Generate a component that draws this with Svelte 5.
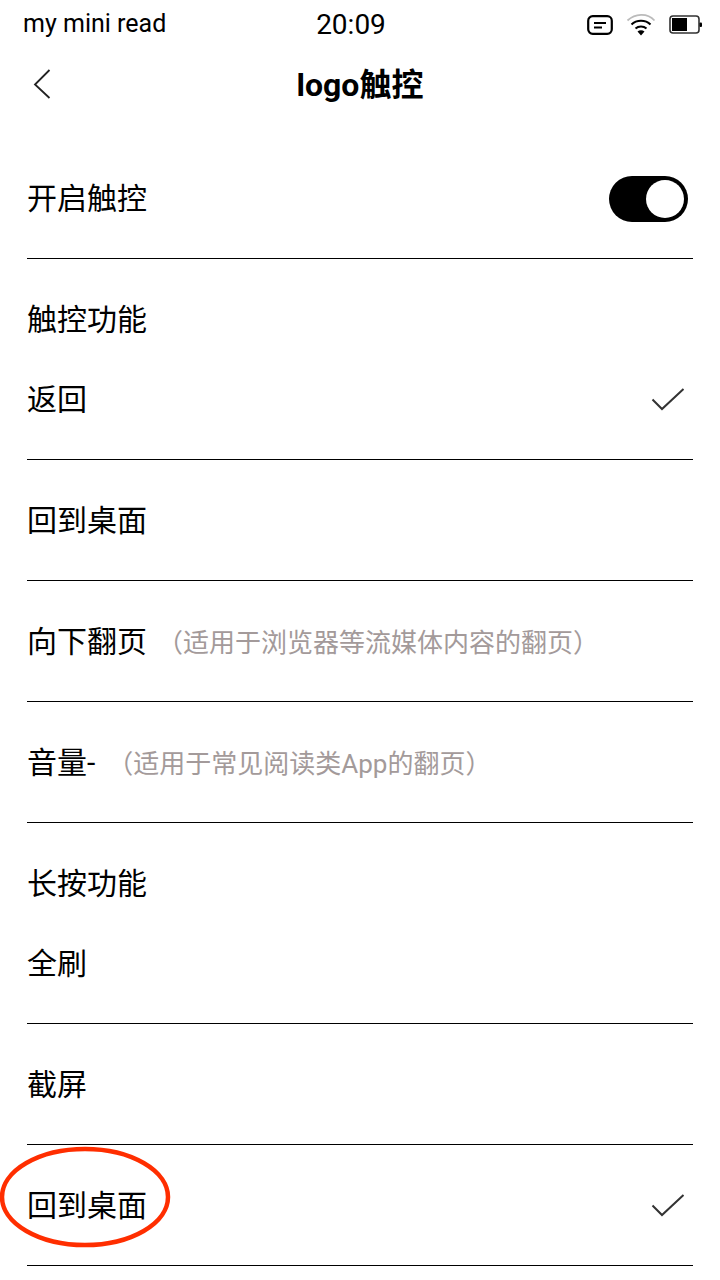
<script>
  const rows = [
    { head: '触控功能', label: '返回', check: true },
    { label: '回到桌面' },
    { label: '向下翻页', note: '（适用于浏览器等流媒体内容的翻页）' },
    { label: '音量-', note: '（适用于常见阅读类App的翻页）', wide: true },
    { head: '长按功能', label: '全刷' },
    { label: '截屏' },
    { label: '回到桌面', check: true }
  ];
</script>

<div class="page">
  <header class="status">
    <span class="app">my mini read</span>
    <span class="time">20:09</span>
    <div class="icons">
      <svg width="26" height="20" viewBox="0 0 26 20" fill="none" stroke="#000">
        <rect x="1.2" y="1.2" width="23.6" height="17.6" rx="4.5" stroke-width="2.2" />
        <path d="M7 8h12M7 12.5h8" stroke-width="2" />
      </svg>
      <svg width="30" height="24" viewBox="0 0 30 24" fill="none">
        <path d="M1.5 7.5C9 .6 21-.6 28.500 7.500" stroke="#bbb" stroke-width="1.800" />
        <path d="M5.500 11.500C10.500 6.500 19.500 6.500 24.500 11.500" stroke="#000" stroke-width="2" />
        <path d="M9.500 15.500C12.500 12.700 17.500 12.700 20.500 15.500" stroke="#000" stroke-width="2" />
        <path d="M11.500 18.500L15 22.500L18.500 18.500C16.500 16.800 13.500 16.800 11.500 18.500Z" fill="#000" />
      </svg>
      <svg width="33" height="20" viewBox="0 0 33 20" fill="none">
        <rect x="1" y="1" width="29" height="17" rx="3" stroke="#333" stroke-width="1.600" />
        <rect x="3" y="3" width="15" height="13" fill="#000" />
        <rect x="30.500" y="7.500" width="2.500" height="4.500" rx="1" fill="#000" />
      </svg>
    </div>
  </header>

  <nav class="nav">
    <svg class="back" width="18" height="30" viewBox="0 0 18 30" fill="none" stroke="#222" stroke-width="1.800">
      <path d="M16.500 1L2 15.500L16.500 29" />
    </svg>
    <h1>logo触控</h1>
  </nav>

  <section class="list">
    <div class="row">
      <span class="label">开启触控</span>
      <span class="toggle"><span class="knob"></span></span>
    </div>
    {#each rows as row}
      {#if row.head}
        <div class="head">{row.head}</div>
      {/if}
      <div class="row">
        <span class="label">{row.label}</span>
        {#if row.note}<span class="note" class:wide={row.wide}>{row.note}</span>{/if}
        {#if row.check}
          <svg class="check" width="34" height="24" viewBox="0 0 34 24" fill="none" stroke="#333" stroke-width="2">
            <path d="M1.500 11.500L11 21L32.500 1" />
          </svg>
        {/if}
      </div>
    {/each}
  </section>

  <svg class="ring" width="172" height="104" viewBox="0 0 172 104" fill="none">
    <ellipse cx="85" cy="52" rx="83" ry="48" stroke="#ff2e00" stroke-width="4.500" />
  </svg>
</div>

<style>
  :global(body) {
    margin: 0;
    background: #fff;
  }
  .page {
    position: relative;
    width: 720px;
    height: 1280px;
    overflow: hidden;
    background: #fff;
    color: #000;
    font-family: Roboto, "Noto Sans CJK SC", sans-serif;
  }
  .status {
    position: relative;
    display: flex;
    align-items: center;
    justify-content: space-between;
    height: 48px;
    padding: 0 18px 0 23px;
  }
  .app {
    font-size: 25px;
    margin-top: -1px;
  }
  .time {
    position: absolute;
    left: 0;
    right: 0;
    top: 8px;
    text-align: center;
    font-size: 28px;
    margin-left: -18px;
  }
  .icons {
    display: flex;
    align-items: center;
    gap: 13px;
    margin-top: 2px;
  }
  .nav {
    position: relative;
    display: flex;
    align-items: center;
    justify-content: center;
    height: 72px;
    margin-top: 1px;
  }
  .back {
    position: absolute;
    left: 33px;
    top: 20px;
  }
  h1 {
    margin: -6px 0 0;
    font-size: 32px;
    font-weight: 700;
  }
  .list {
    margin: 17px 27px 0;
  }
  .row {
    display: flex;
    align-items: center;
    height: 116px;
    padding-bottom: 4px;
    border-bottom: 1px solid #000;
    font-size: 30px;
  }
  .head {
    height: 39px;
    padding-top: 41px;
    line-height: 40px;
    font-size: 30px;
  }
  .note {
    font-size: 26px;
    color: #a39a9a;
    margin-left: 10px;
    margin-top: 2px;
  }
  .note.wide {
    margin-left: 12px;
  }
  .check {
    margin-left: auto;
    margin-right: 8px;
    margin-top: 6px;
  }
  .toggle {
    position: relative;
    margin-left: auto;
    margin-right: 5px;
    margin-top: 6px;
    width: 79px;
    height: 46px;
    border-radius: 23px;
    background: #000;
  }
  .knob {
    position: absolute;
    right: 4px;
    top: 4px;
    width: 38px;
    height: 38px;
    border-radius: 50%;
    background: #fff;
  }
  .ring {
    position: absolute;
    left: 0;
    top: 1145px;
  }
</style>
